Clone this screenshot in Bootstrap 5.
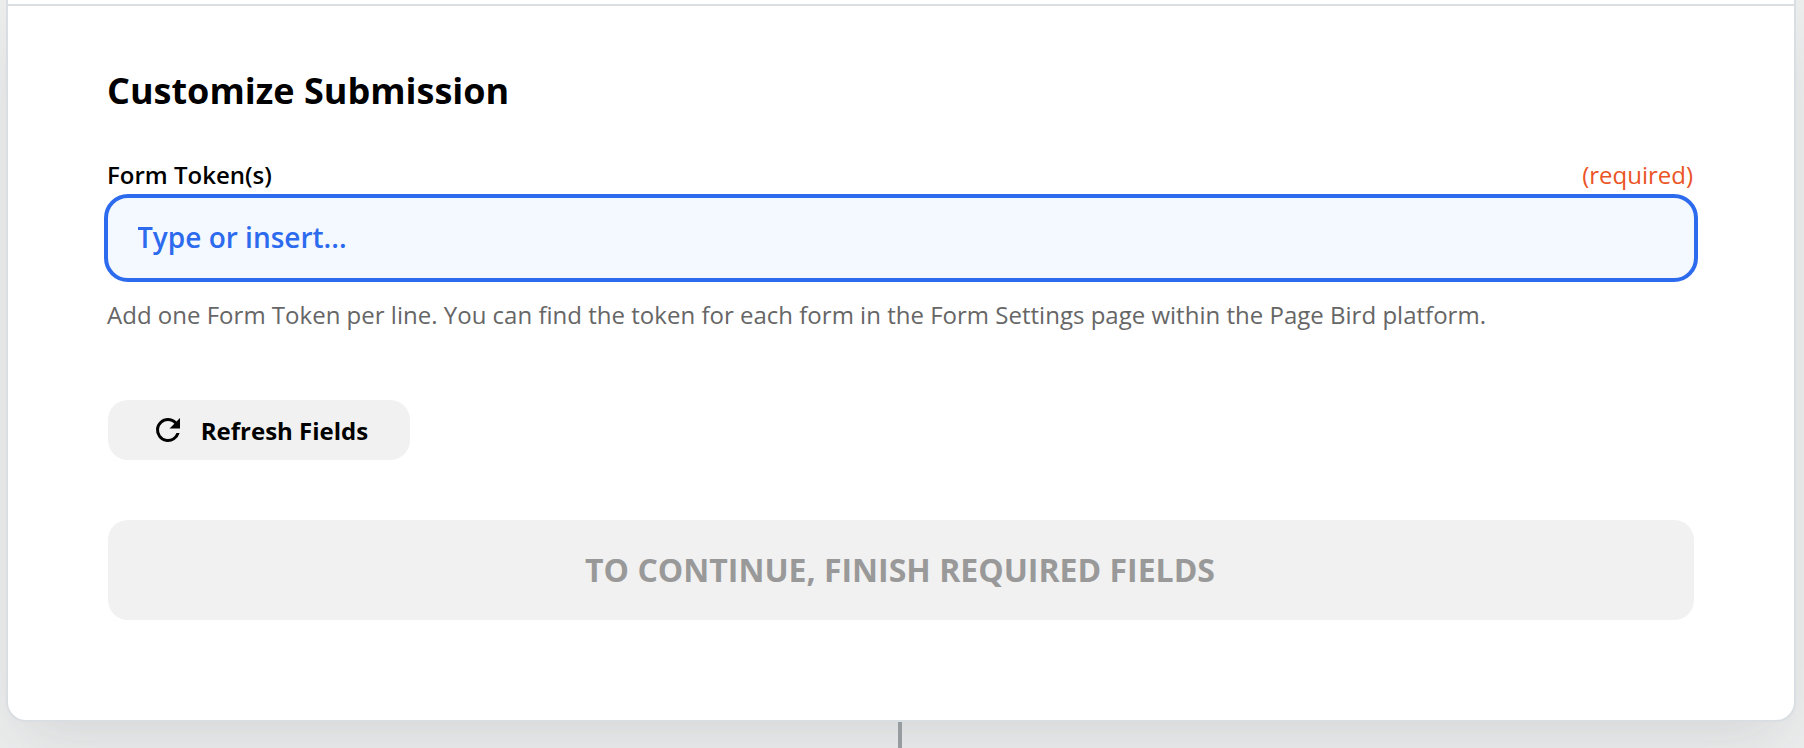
<!DOCTYPE html>
<html lang="en">
<head>
    <meta charset="UTF-8">
    <meta name="viewport" content="width=device-width, initial-scale=1.0">
    <title>Customize Submission</title>
    <link href="https://cdn.jsdelivr.net/npm/bootstrap@5.3.0/dist/css/bootstrap.min.css" rel="stylesheet">
    <style>
        body {
            height: 748px;
            padding: 0 8px 0 6px;
            background: #ebecec;
            font-family: "Open Sans", sans-serif;
            font-size: 24px;
            line-height: 32px;
            color: #000;
        }
        .step-panel {
            height: 722px;
            background: #fff;
            border: 2px solid #d9dee2;
            border-top: 0;
            border-radius: 0 0 20px 20px;
            box-shadow: 0 26px 60px -18px rgba(60, 62, 70, .14);
        }
        .step-divider {
            height: 6px;
            border-bottom: 2px solid #dcdfe2;
        }
        .step-body {
            padding: 61px 101px 0 99px;
        }
        .step-title {
            margin-bottom: 44px;
            font-size: 36px;
            line-height: 48px;
            font-weight: 700;
        }
        .token-label {
            font-weight: 600;
        }
        .token-required {
            color: #eb5424;
        }
        .token-input,
        .token-input:focus {
            width: auto;
            height: 88px;
            padding: 0 30px 2px 30px;
            background: #f4f8ff;
            border: 4px solid #2d6bee;
            border-radius: 24px;
            box-shadow: none;
            font-size: 28px;
            font-weight: 600;
            text-indent: -1px;
        }
        .token-field {
            display: grid;
            margin: 3px -5px 17px -3px;
        }
        .token-input::placeholder {
            color: #2d6bee;
            opacity: 1;
        }
        .token-help {
            margin-bottom: 69px;
            color: #666;
            letter-spacing: .01px;
        }
        .btn-refresh {
            width: 302px;
            height: 60px;
            gap: 15px;
            margin-left: 1px;
            padding: 2px 0 0;
            background: #f1f1f1;
            border: 0;
            border-radius: 20px;
            font-size: 24px;
            font-weight: 700;
            color: #000;
        }
        .btn-refresh svg {
            margin-top: -2px;
        }
        .btn-continue,
        .btn-continue:disabled {
            height: 100px;
            margin: 60px -1px 0 1px;
            padding: 0 2px 0 0;
            background: #f1f1f1;
            border: 0;
            border-radius: 20px;
            font-size: 32px;
            font-weight: 700;
            color: #999;
            opacity: 1;
        }
        .step-connector {
            width: 4px;
            height: 26px;
            margin-left: 892px;
            background: #969ca0;
        }
    </style>
</head>
<body class="overflow-hidden">
    <div class="step-panel">
        <div class="step-divider"></div>
        <form class="step-body">
            <h2 class="step-title">Customize Submission</h2>
            <div class="d-flex justify-content-between">
                <label for="tokens" class="token-label">Form Token(s)</label>
                <span class="token-required">(required)</span>
            </div>
            <div class="token-field">
                <input type="text" class="form-control token-input" id="tokens" name="tokens" placeholder="Type or insert...">
            </div>
            <p class="token-help">Add one Form Token per line. You can find the token for each form in the Form Settings page within the Page Bird platform.</p>
            <button type="button" class="btn btn-refresh d-flex align-items-center justify-content-center">
                <svg width="36" height="36" viewBox="0 0 24 24" fill="currentColor" aria-hidden="true">
                    <path d="M17.65 6.35A7.96 7.96 0 0 0 12 4a8 8 0 1 0 7.73 10h-2.08A6 6 0 1 1 12 6c1.66 0 3.14.69 4.22 1.78L13 11h7V4l-2.35 2.35z"/>
                </svg>
                Refresh Fields
            </button>
            <button type="submit" class="btn btn-continue w-100" disabled>TO CONTINUE, FINISH REQUIRED FIELDS</button>
        </form>
    </div>
    <div class="step-connector"></div>
    <script src="https://cdn.jsdelivr.net/npm/bootstrap@5.3.0/dist/js/bootstrap.bundle.min.js"></script>
</body>
</html>
